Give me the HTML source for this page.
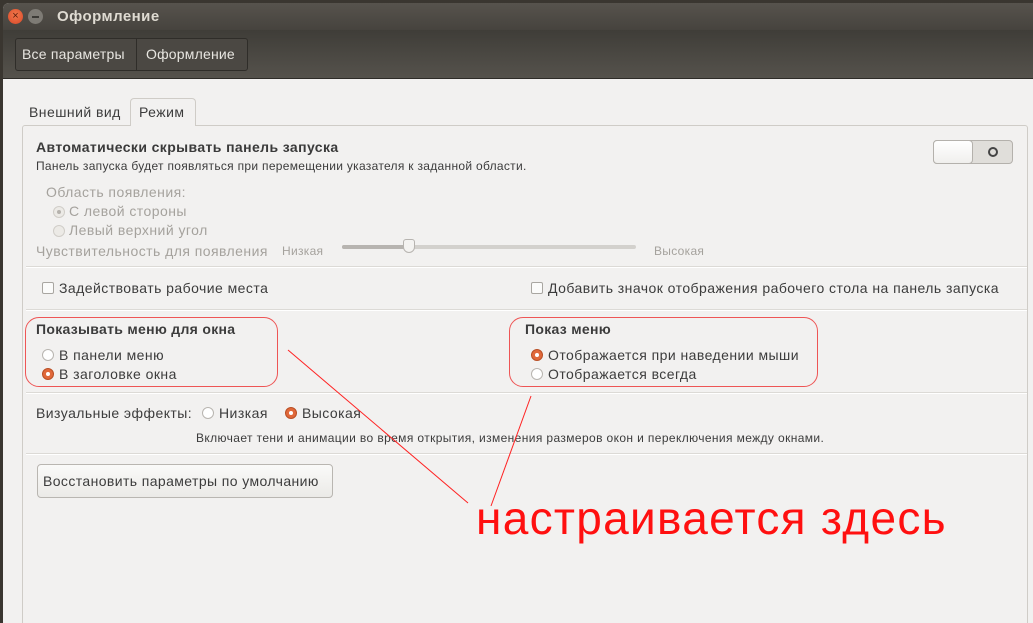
<!DOCTYPE html>
<html><head><meta charset="utf-8"><style>
*{margin:0;padding:0;box-sizing:border-box}
body{width:1033px;height:612px;overflow:hidden;background:#3a3630;font-family:"Liberation Sans","DejaVu Sans",sans-serif;color:#3c3c3c;position:relative;letter-spacing:0.45px}
.a{position:absolute;white-space:nowrap}
.s{letter-spacing:0.3px}
.win{position:absolute;left:3px;top:3px;width:1040px;height:620px;background:#f2f1f0;border-radius:6px 0 0 0;overflow:hidden}
.title{position:absolute;left:0;top:0;width:100%;height:27px;background:linear-gradient(#57534d,#46433e)}
.tool{position:absolute;left:0;top:27px;width:100%;height:49px;background:linear-gradient(#3f3d38,#55524c);border-bottom:1px solid #2e2c28}
.sep{position:absolute;left:23px;width:1001px;height:2px;border-top:1px solid #dcdad6;border-bottom:1px solid #fff}
.rb{position:absolute;width:12px;height:12px;border-radius:50%;border:1px solid #b8b5b0;background:#fff}
.rb.on{background:#e0683a;border-color:#b94f25}
.rb.on::after{content:"";position:absolute;left:3px;top:3px;width:4px;height:4px;border-radius:50%;background:#fff}
.rb.dis{background:#eceae6;border-color:#d0cdc8}
.cb{position:absolute;width:12px;height:12px;border:1px solid #a9a6a1;border-radius:2px;background:#fbfbfa}
.red{position:absolute;border:1.3px solid #ee5555;border-radius:14px}
</style></head><body>
<div class="win">
 <div class="title"></div>
 <div class="a" style="left:5px;top:6px;width:15px;height:15px;border-radius:50%;background:radial-gradient(circle at 50% 40%,#f2784a,#d8482a);color:#5a1c0c;font-size:11px;line-height:15px;text-align:center;letter-spacing:0">×</div>
 <div class="a" style="left:25px;top:6px;width:15px;height:15px;border-radius:50%;background:#7e7b75"><div style="position:absolute;left:4px;top:7px;width:7px;height:1.5px;background:#3c3a36"></div></div>
 <div class="a" style="left:54px;top:5px;font-size:15px;font-weight:bold;color:#dfdbd2">Оформление</div>
 <div class="tool"></div>
 <div class="a" style="left:12px;top:35px;width:233px;height:33px;border:1px solid #2f2d29;border-radius:3px;background:#4b4843"></div>
 <div class="a" style="left:133px;top:36px;width:1px;height:31px;background:#2f2d29"></div>
 <div class="a" style="left:19px;top:43px;font-size:14px;color:#e8e6e1;letter-spacing:0.2px">Все параметры</div>
 <div class="a" style="left:143px;top:43px;font-size:14px;color:#e8e6e1;letter-spacing:0.2px">Оформление</div>

 <div class="a" style="left:26px;top:101px;font-size:14px">Внешний вид</div>
 <div class="a" style="left:127px;top:95px;width:66px;height:28px;border:1px solid #cfccc7;border-bottom:none;border-radius:4px 4px 0 0;background:#f2f1f0;z-index:2"></div>
 <div class="a" style="left:136px;top:101px;font-size:14px;z-index:3">Режим</div>
 <div class="a" style="left:19px;top:122px;width:1006px;height:520px;border:1px solid #cfccc7;border-radius:3px"></div>

 <div class="a" style="left:33px;top:136px;font-size:14px;font-weight:bold;color:#3a3a3a;letter-spacing:0.4px">Автоматически скрывать панель запуска</div>
 <div class="a s" style="left:33px;top:156px;font-size:12px">Панель запуска будет появляться при перемещении указателя к заданной области.</div>
 <div class="a" style="left:930px;top:137px;width:80px;height:24px;border:1px solid #b4b1ac;border-radius:4px;background:#e0deda"></div>
 <div class="a" style="left:930px;top:137px;width:40px;height:24px;border:1px solid #b4b1ac;border-radius:4px;background:linear-gradient(#fff,#f0efed)"></div>
 <div class="a" style="left:985px;top:144px;width:10px;height:10px;border:2px solid #444;border-radius:50%"></div>

 <div class="a" style="left:43px;top:181px;font-size:14px;color:#a5a29d">Область появления:</div>
 <div class="rb dis" style="left:50px;top:203px"></div><div class="a" style="left:54px;top:207px;width:4px;height:4px;border-radius:50%;background:#b5b2ad"></div>
 <div class="a" style="left:66px;top:200px;font-size:14px;color:#a5a29d">С левой стороны</div>
 <div class="rb dis" style="left:50px;top:222px"></div>
 <div class="a" style="left:66px;top:219px;font-size:14px;color:#a5a29d">Левый верхний угол</div>
 <div class="a" style="left:33px;top:240px;font-size:14px;color:#a5a29d">Чувствительность для появления</div>
 <div class="a s" style="left:279px;top:241px;font-size:12px;color:#a5a29d">Низкая</div>
 <div class="a" style="left:339px;top:242px;width:294px;height:4px;border-radius:2px;background:#d3d1cd"></div>
 <div class="a" style="left:339px;top:242px;width:68px;height:4px;border-radius:2px;background:#b7b4b0"></div>
 <div class="a" style="left:400px;top:236px;width:12px;height:14px;border:1px solid #b7b4b0;border-radius:3px 3px 6px 6px;background:#f4f3f1"></div>
 <div class="a s" style="left:651px;top:241px;font-size:12px;color:#a5a29d">Высокая</div>
 <div class="sep" style="top:263px"></div>

 <div class="cb" style="left:39px;top:279px"></div>
 <div class="a" style="left:56px;top:277px;font-size:14px">Задействовать рабочие места</div>
 <div class="cb" style="left:528px;top:279px"></div>
 <div class="a" style="left:545px;top:277px;font-size:14px">Добавить значок отображения рабочего стола на панель запуска</div>
 <div class="sep" style="top:306px"></div>

 <div class="a" style="left:33px;top:318px;font-size:14px;font-weight:bold;letter-spacing:0.3px">Показывать меню для окна</div>
 <div class="rb" style="left:39px;top:346px"></div>
 <div class="a" style="left:56px;top:344px;font-size:14px">В панели меню</div>
 <div class="rb on" style="left:39px;top:365px"></div>
 <div class="a" style="left:56px;top:363px;font-size:14px">В заголовке окна</div>
 <div class="a" style="left:522px;top:318px;font-size:14px;font-weight:bold;letter-spacing:0.3px">Показ меню</div>
 <div class="rb on" style="left:528px;top:346px"></div>
 <div class="a" style="left:545px;top:344px;font-size:14px">Отображается при наведении мыши</div>
 <div class="rb" style="left:528px;top:365px"></div>
 <div class="a" style="left:545px;top:363px;font-size:14px">Отображается всегда</div>
 <div class="sep" style="top:389px"></div>

 <div class="a" style="left:33px;top:402px;font-size:14px">Визуальные эффекты:</div>
 <div class="rb" style="left:199px;top:404px"></div>
 <div class="a" style="left:216px;top:402px;font-size:14px">Низкая</div>
 <div class="rb on" style="left:282px;top:404px"></div>
 <div class="a" style="left:299px;top:402px;font-size:14px">Высокая</div>
 <div class="a" style="left:193px;top:428px;font-size:12px;letter-spacing:0.38px">Включает тени и анимации во время открытия, изменения размеров окон и переключения между окнами.</div>
 <div class="sep" style="top:450px"></div>

 <div class="a" style="left:34px;top:461px;width:296px;height:34px;border:1px solid #b9b6b1;border-radius:4px;background:linear-gradient(#fafaf9,#ebeae7)"></div>
 <div class="a" style="left:40px;top:470px;font-size:14px;letter-spacing:0.4px">Восстановить параметры по умолчанию</div>
</div>

<div class="red" style="left:25px;top:317px;width:253px;height:70px"></div>
<div class="red" style="left:509px;top:317px;width:309px;height:70px"></div>
<svg class="a" style="left:0;top:0" width="1033" height="612"><line x1="288" y1="350" x2="468" y2="503" stroke="#f22" stroke-width="1"/><line x1="531" y1="396" x2="491" y2="506" stroke="#f22" stroke-width="1"/></svg>
<div class="a" style="left:476px;top:491px;font-size:46px;color:#ff1010;letter-spacing:1.3px">настраивается здесь</div>
</body></html>
